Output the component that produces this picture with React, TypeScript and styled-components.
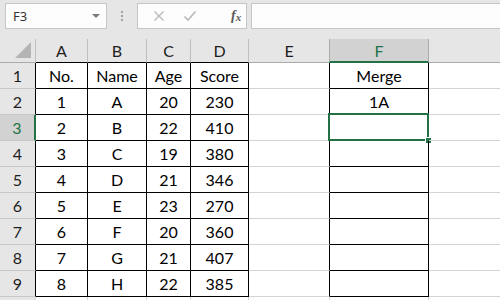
import styled, { createGlobalStyle } from 'styled-components';

const GREEN = '#217346';
const GRID = '#d4d4d4';
const INK = '#000';

// the last column runs past the window edge; its label is not in view
const columns = ['A', 'B', 'C', 'D', 'E', 'F', ''];

const rows: string[][] = [
  ['No.', 'Name', 'Age', 'Score', '', 'Merge', ''],
  ['1', 'A', '20', '230', '', '1A', ''],
  ['2', 'B', '22', '410', '', '', ''],
  ['3', 'C', '19', '380', '', '', ''],
  ['4', 'D', '21', '346', '', '', ''],
  ['5', 'E', '23', '270', '', '', ''],
  ['6', 'F', '20', '360', '', '', ''],
  ['7', 'G', '21', '407', '', '', ''],
  ['8', 'H', '22', '385', '', '', ''],
  ['', '', '', '', '', '', ''],
];

const activeCol = 5;
const activeRow = 2;

// which cells carry the black "all borders" formatting
const inTable = (r: number, c: number) => r < 9 && (c <= 3 || c === 5);

const App = () => {
  return (
    <>
      <GlobalStyle />
      <Window>
        <Toolbar>
          <NameBox>
            <span>F3</span>
            <Caret />
          </NameBox>
          <Grip>
            <i />
            <i />
            <i />
          </Grip>
          <FormulaButtons>
            <svg width="12" height="12" viewBox="0 0 12 12">
              <path d="M1.5 1.5 L10.5 10.5 M10.5 1.5 L1.5 10.5" stroke="#b9b9b9" strokeWidth="1.4" fill="none" />
            </svg>
            <svg width="14" height="12" viewBox="0 0 14 12">
              <path d="M1.5 6.5 L5 10 L12.5 1.5" stroke="#b9b9b9" strokeWidth="1.6" fill="none" />
            </svg>
            <Fx>
              f<sub>x</sub>
            </Fx>
          </FormulaButtons>
          <FormulaInput />
        </Toolbar>
        <Sheet>
          <Corner>
            <svg width="18" height="18" viewBox="0 0 18 18">
              <path d="M17 1 L17 17 L1 17 Z" fill="#b4b4b4" />
            </svg>
          </Corner>
          {columns.map((name, c) => (
            <ColHead
              key={c}
              $active={c === activeCol}
              $bottom={c === activeCol ? GREEN : c <= 3 ? INK : '#ababab'}
            >
              {name}
            </ColHead>
          ))}
          {rows.map((cells, r) => (
            <Row key={r} cells={cells} r={r} />
          ))}
        </Sheet>
      </Window>
    </>
  );
};

const Row = ({ cells, r }: { cells: string[]; r: number }) => (
  <>
    <RowHead $active={r === activeRow} $right={r < 9 ? INK : GRID}>
      {r < 9 ? r + 1 : ''}
    </RowHead>
    {cells.map((text, c) => {
      const right = inTable(r, c) || (c === 4 && inTable(r, 5)) ? INK : GRID;
      const bottom = inTable(r, c) ? INK : GRID;
      const selected = r === activeRow && c === activeCol;
      return (
        <Cell key={c} $right={right} $bottom={bottom}>
          {text}
          {selected && (
            <Selection>
              <Handle />
            </Selection>
          )}
        </Cell>
      );
    })}
  </>
);

export default App;

const GlobalStyle = createGlobalStyle`
  html, body {
    margin: 0;
    padding: 0;
    background: #e6e6e6;
  }
`;

const Window = styled.div`
  width: 500px;
  height: 300px;
  overflow: hidden;
  background: #e6e6e6;
  font-family: Lato, 'Noto Sans', sans-serif;
`;

const Toolbar = styled.div`
  display: flex;
  align-items: center;
  height: 26px;
  padding: 3px 0 0 5px;
  margin-bottom: 10px;
`;

const boxStyle = `
  box-sizing: border-box;
  height: 26px;
  background: #fdfdfd;
  border: 1px solid #c6c6c6;
`;

const NameBox = styled.div`
  ${boxStyle}
  width: 102px;
  display: flex;
  align-items: center;
  justify-content: space-between;
  padding: 0 6px 0 7px;
  font-family: 'Noto Sans', sans-serif;
  font-size: 13px;
  color: #333;
`;

const Caret = styled.span`
  width: 0;
  height: 0;
  border-left: 4px solid transparent;
  border-right: 4px solid transparent;
  border-top: 4px solid #7a7a7a;
`;

const Grip = styled.div`
  display: flex;
  flex-direction: column;
  gap: 2px;
  width: 30px;
  align-items: center;

  i {
    display: block;
    width: 2px;
    height: 2px;
    background: #a0a0a0;
  }
`;

const FormulaButtons = styled.div`
  ${boxStyle}
  width: 110px;
  display: flex;
  align-items: center;
  padding: 0 0 0 15px;
  gap: 18px;

  svg:nth-child(2) {
    margin-right: 16px;
  }
`;

const Fx = styled.span`
  font-family: 'Liberation Serif', serif;
  font-style: italic;
  font-weight: bold;
  font-size: 14px;
  color: #5a5a5a;

  sub {
    font-size: 11px;
    vertical-align: -1px;
  }
`;

const FormulaInput = styled.div`
  ${boxStyle}
  flex: 1;
  margin-left: 4px;
  border-right: none;
`;

const Sheet = styled.div`
  display: grid;
  grid-template-columns: 36px 52px 59px 44px 58px 81px 99px 160px;
  grid-template-rows: 24px;
  grid-auto-rows: 26px;
  background: #fff;
  font-size: 16px;
`;

const Corner = styled.div`
  box-sizing: border-box;
  background: #e6e6e6;
  border-right: 1px solid #bfbfbf;
  border-bottom: 1px solid #ababab;
  display: flex;
  align-items: flex-end;
  justify-content: flex-end;
  padding: 0 3px 3px 0;
`;

const ColHead = styled.div<{ $active?: boolean; $bottom: string }>`
  box-sizing: border-box;
  display: flex;
  align-items: center;
  justify-content: center;
  background: ${({ $active }) => ($active ? '#d2d2d2' : '#e6e6e6')};
  color: ${({ $active }) => ($active ? GREEN : '#1e1e1e')};
  border-right: 1px solid ${({ $active }) => ($active ? '#ababab' : '#bfbfbf')};
  border-bottom: ${({ $active }) => ($active ? 2 : 1)}px solid ${({ $bottom }) => $bottom};
  ${({ $active }) => ($active ? 'border-left: 1px solid #ababab; margin-left: -1px;' : '')}
`;

const RowHead = styled.div<{ $active?: boolean; $right: string }>`
  box-sizing: border-box;
  display: flex;
  align-items: center;
  justify-content: center;
  background: ${({ $active }) => ($active ? '#d2d2d2' : '#e6e6e6')};
  color: ${({ $active }) => ($active ? GREEN : '#1e1e1e')};
  border-bottom: 1px solid #c8c8c8;
  border-right: ${({ $active }) => ($active ? 2 : 1)}px solid
    ${({ $active, $right }) => ($active ? GREEN : $right)};
`;

const Cell = styled.div<{ $right: string; $bottom: string }>`
  position: relative;
  box-sizing: border-box;
  display: flex;
  align-items: center;
  justify-content: center;
  color: #000;
  border-right: 1px solid ${({ $right }) => $right};
  border-bottom: 1px solid ${({ $bottom }) => $bottom};
`;

const Selection = styled.div`
  position: absolute;
  left: -2px;
  top: -2px;
  right: -1px;
  bottom: -1px;
  border: 2px solid ${GREEN};
`;

const Handle = styled.span`
  position: absolute;
  right: -5px;
  bottom: -5px;
  width: 5px;
  height: 5px;
  background: ${GREEN};
  border: 1px solid #fff;
`;
